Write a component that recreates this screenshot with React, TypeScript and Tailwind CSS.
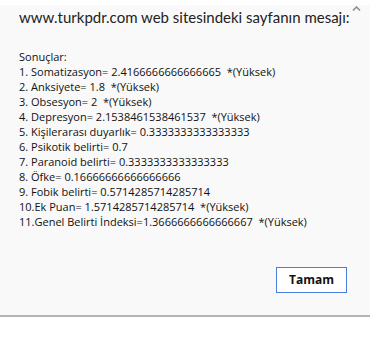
const LINES = [
  'Sonuçlar:',
  '1. Somatizasyon= 2.4166666666666665  *(Yüksek)',
  '2. Anksiyete= 1.8  *(Yüksek)',
  '3. Obsesyon= 2  *(Yüksek)',
  '4. Depresyon= 2.1538461538461537  *(Yüksek)',
  '5. Kişilerarası duyarlık= 0.3333333333333333',
  '6. Psikotik belirti= 0.7',
  '7. Paranoid belirti= 0.3333333333333333',
  '8. Öfke= 0.16666666666666666',
  '9. Fobik belirti= 0.5714285714285714',
  '10.Ek Puan= 1.5714285714285714  *(Yüksek)',
  '11.Genel Belirti İndeksi=1.3666666666666667  *(Yüksek)',
]

export default function App() {
  return (
    <div className="w-[392px] h-[338px] bg-white relative overflow-hidden font-['Open_Sans',sans-serif]">
      <div className="w-[370px] h-[312px] mt-[5px] bg-[#f9f9f9] border-b-2 border-[#b4b4b4] flex flex-col relative">
        <div className="pl-[19px] pt-[2px] font-['Lato',sans-serif] text-[15px] leading-[20px] text-[#222] whitespace-nowrap">
          www.turkpdr.com web sitesindeki sayfanın mesajı:
        </div>
        <svg className="absolute left-[352px] top-[1px]" width="9" height="5" viewBox="0 0 9 5">
          <path d="M1 4.5 L4.5 1 L8 4.5" fill="none" stroke="#8a8a8a" strokeWidth="1.5" />
        </svg>
        <div className="pl-[19px] pt-[22px] text-[11px] leading-[15px] text-[#111] whitespace-pre">
          {LINES.map((l) => (
            <div key={l}>{l}</div>
          ))}
        </div>
        <div className="mt-auto flex justify-end pr-[23px] pb-[22px]">
          <button className="w-[71px] h-[26px] border border-[#4a7fe0] bg-white text-[12px] font-bold text-[#111]">
            Tamam
          </button>
        </div>
      </div>
    </div>
  )
}
